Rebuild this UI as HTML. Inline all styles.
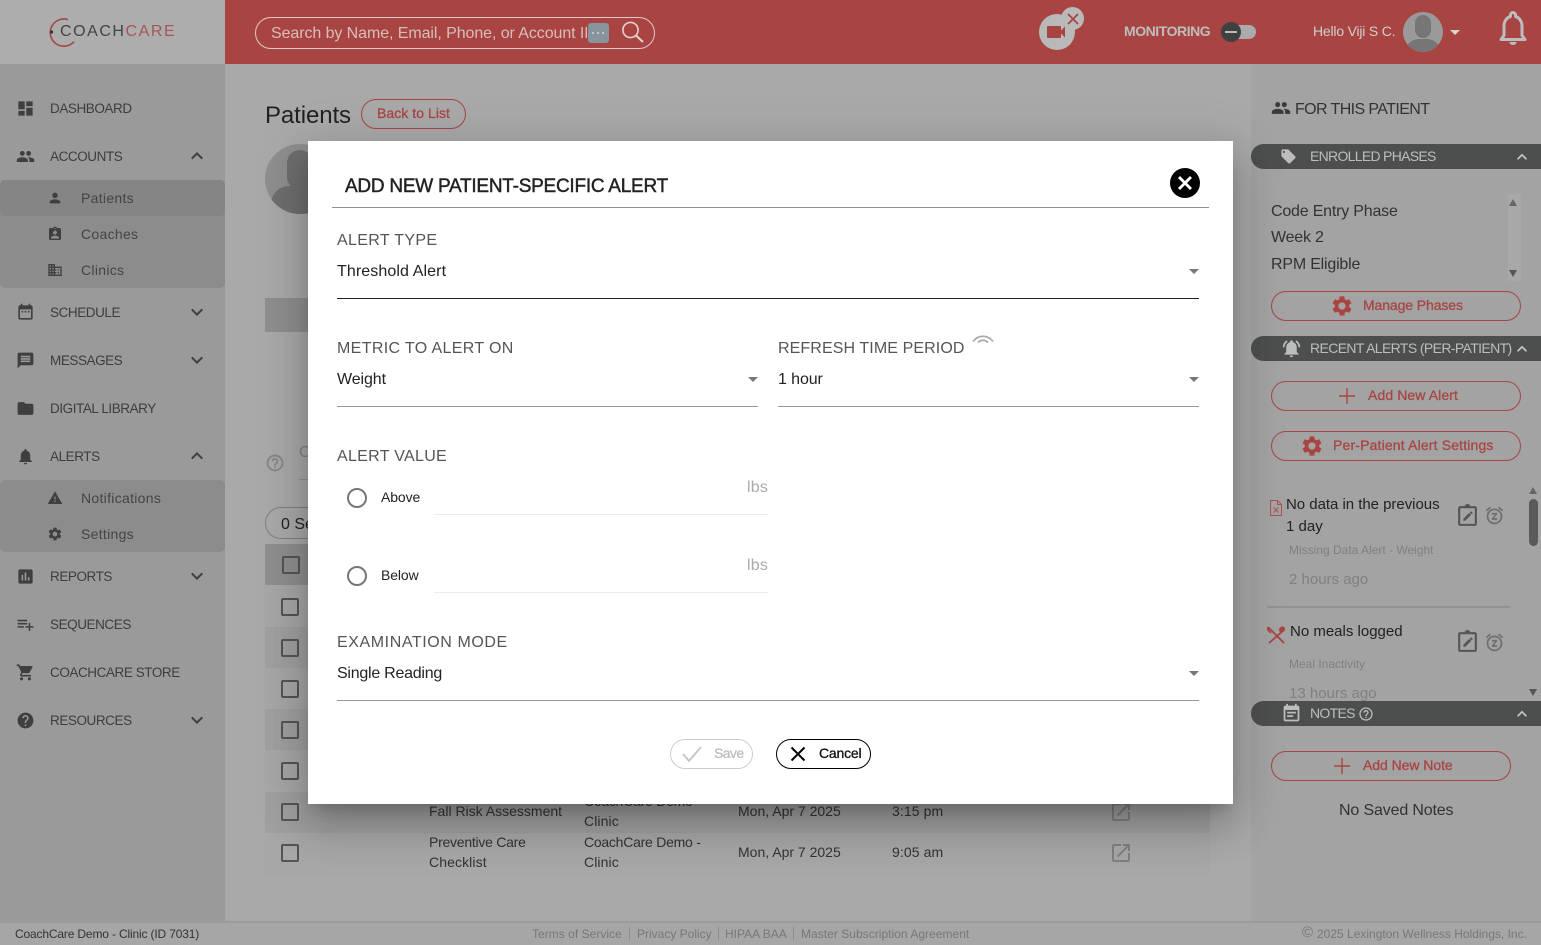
<!DOCTYPE html>
<html lang="en">
<head>
<meta charset="utf-8">
<title>CoachCare</title>
<style>
*{box-sizing:border-box}
html,body{margin:0;padding:0;width:1541px;height:945px;overflow:hidden;background:#a9a9a9;font-family:"Liberation Sans",Arial,sans-serif;color:#333}
.b{position:absolute}
.t{position:absolute;white-space:nowrap;line-height:20px;margin-top:-10px;font-size:14px}
svg.i{position:absolute;fill:currentColor}
.nav{color:#3d3d3d;font-size:13.5px;letter-spacing:-.43px}
.sub{color:#444;font-size:14px;letter-spacing:.3px}
.pill{position:absolute;border:1px solid #a84543;border-radius:16px}
.red{color:#a84543;font-weight:400;-webkit-text-stroke:.3px #a84543;font-size:14px;letter-spacing:.1px}
.bar{position:absolute;left:1251px;width:290px;background:#4d4f4f;border-radius:13px 0 0 13px}
.bt{color:#bdbdbd;font-size:14px;letter-spacing:-.7px}
.lab{color:#555;font-size:16px;letter-spacing:.35px}
.val{color:#222;font-size:16px;letter-spacing:-.1px}
.row{position:absolute;left:265px;width:945px;height:41px}
.cb{position:absolute;width:18px;height:18px;border:2px solid #555;border-radius:2px}
.cell{color:#333;font-size:14px;letter-spacing:0}
.foot{color:#777;font-size:12px;letter-spacing:0}
#modal{position:absolute;left:308px;top:141px;width:925px;height:663px;background:#fff;box-shadow:0 11px 15px -7px rgba(0,0,0,.2),0 24px 38px 3px rgba(0,0,0,.14),0 9px 46px 8px rgba(0,0,0,.12)}
</style>
</head>
<body>
<svg width="0" height="0" style="position:absolute">
<defs>
<symbol id="dash" viewBox="0 0 24 24"><path d="M3 13h8V3H3v10zm0 8h8v-6H3v6zm10 0h8V11h-8v10zm0-18v6h8V3h-8z"/></symbol>
<symbol id="group" viewBox="0 0 24 24"><path d="M16 11c1.66 0 2.99-1.34 2.99-3S17.66 5 16 5c-1.66 0-3 1.34-3 3s1.34 3 3 3zm-8 0c1.66 0 2.99-1.34 2.99-3S9.66 5 8 5C6.34 5 5 6.34 5 8s1.34 3 3 3zm0 2c-2.33 0-7 1.17-7 3.5V19h14v-2.5c0-2.33-4.67-3.5-7-3.5zm8 0c-.29 0-.62.02-.97.05 1.16.84 1.97 1.97 1.97 3.45V19h6v-2.5c0-2.33-4.67-3.5-7-3.5z"/></symbol>
<symbol id="less" viewBox="0 0 24 24"><path d="M12 8l-6 6 1.41 1.41L12 10.83l4.59 4.58L18 14z"/></symbol>
<symbol id="more" viewBox="0 0 24 24"><path d="M16.59 8.59L12 13.17 7.41 8.59 6 10l6 6 6-6z"/></symbol>
<symbol id="person" viewBox="0 0 24 24"><path d="M12 12c2.21 0 4-1.79 4-4s-1.79-4-4-4-4 1.79-4 4 1.79 4 4 4zm0 2c-2.67 0-8 1.34-8 4v2h16v-2c0-2.66-5.33-4-8-4z"/></symbol>
<symbol id="ind" viewBox="0 0 24 24"><path d="M19 3h-4.18C14.4 1.84 13.3 1 12 1c-1.3 0-2.4.84-2.82 2H5c-1.1 0-2 .9-2 2v14c0 1.1.9 2 2 2h14c1.1 0 2-.9 2-2V5c0-1.1-.9-2-2-2zm-7 0c.55 0 1 .45 1 1s-.45 1-1 1-1-.45-1-1 .45-1 1-1zm0 4c1.66 0 3 1.34 3 3s-1.34 3-3 3-3-1.34-3-3 1.34-3 3-3zm6 12H6v-1.4c0-2 4-3.1 6-3.1s6 1.1 6 3.1V19z"/></symbol>
<symbol id="domain" viewBox="0 0 24 24"><path d="M12 7V3H2v18h20V7H12zM6 19H4v-2h2v2zm0-4H4v-2h2v2zm0-4H4V9h2v2zm0-4H4V5h2v2zm4 12H8v-2h2v2zm0-4H8v-2h2v2zm0-4H8V9h2v2zm0-4H8V5h2v2zm10 12h-8v-2h2v-2h-2v-2h2v-2h-2V9h8v10zm-2-8h-2v2h2v-2zm0 4h-2v2h2v-2z"/></symbol>
<symbol id="event" viewBox="0 0 24 24"><path d="M19 3h-1V1h-2v2H8V1H6v2H5c-1.11 0-2 .9-2 2v14c0 1.1.89 2 2 2h14c1.1 0 2-.9 2-2V5c0-1.1-.9-2-2-2zm0 16H5V8h14v11zM7 10h2v2H7zm4 0h2v2h-2zm4 0h2v2h-2z"/></symbol>
<symbol id="msg" viewBox="0 0 24 24"><path d="M20 2H4c-1.1 0-1.99.9-1.99 2L2 22l4-4h14c1.1 0 2-.9 2-2V4c0-1.1-.9-2-2-2zm-2 12H6v-2h12v2zm0-3H6V9h12v2zm0-3H6V6h12v2z"/></symbol>
<symbol id="folder" viewBox="0 0 24 24"><path d="M10 4H4c-1.1 0-1.99.9-1.99 2L2 18c0 1.1.9 2 2 2h16c1.1 0 2-.9 2-2V8c0-1.1-.9-2-2-2h-8l-2-2z"/></symbol>
<symbol id="bell" viewBox="0 0 24 24"><path d="M12 22c1.1 0 2-.9 2-2h-4c0 1.1.89 2 2 2zm6-6v-5c0-3.07-1.64-5.64-4.5-6.32V4c0-.83-.67-1.5-1.5-1.5s-1.5.67-1.5 1.5v.68C7.63 5.36 6 7.92 6 11v5l-2 2v1h16v-1l-2-2z"/></symbol>
<symbol id="bella" viewBox="0 0 24 24"><path d="M7.58 4.08L6.15 2.65C3.75 4.48 2.17 7.3 2.03 10.5h2c.15-2.65 1.51-4.97 3.55-6.42zm12.39 6.42h2c-.15-3.2-1.73-6.02-4.12-7.85l-1.42 1.43c2.02 1.45 3.39 3.77 3.54 6.42zM18 11c0-3.07-1.64-5.64-4.5-6.32V4c0-.83-.67-1.5-1.5-1.5s-1.5.67-1.5 1.5v.68C7.63 5.36 6 7.92 6 11v5l-2 2v1h16v-1l-2-2v-5zm-6 11c.14 0 .27-.01.4-.04.65-.14 1.18-.58 1.44-1.18.1-.24.15-.5.15-.78h-4c.01 1.1.9 2 2.01 2z"/></symbol>
<symbol id="warn" viewBox="0 0 24 24"><path d="M1 21h22L12 2 1 21zm12-3h-2v-2h2v2zm0-4h-2v-4h2v4z"/></symbol>
<symbol id="gear" viewBox="0 0 24 24"><path d="M19.14 12.94c.04-.3.06-.61.06-.94 0-.32-.02-.64-.07-.94l2.03-1.58c.18-.14.23-.41.12-.61l-1.92-3.32c-.12-.22-.37-.29-.59-.22l-2.39.96c-.5-.38-1.03-.7-1.62-.94l-.36-2.54c-.04-.24-.24-.41-.48-.41h-3.84c-.24 0-.43.17-.47.41l-.36 2.54c-.59.24-1.13.57-1.62.94l-2.39-.96c-.22-.08-.47 0-.59.22L2.74 8.87c-.12.21-.08.47.12.61l2.03 1.58c-.05.3-.09.63-.09.94s.02.64.07.94l-2.03 1.58c-.18.14-.23.41-.12.61l1.92 3.32c.12.22.37.29.59.22l2.39-.96c.5.38 1.03.7 1.62.94l.36 2.54c.05.24.24.41.48.41h3.84c.24 0 .44-.17.47-.41l.36-2.54c.59-.24 1.13-.56 1.62-.94l2.39.96c.22.08.47 0 .59-.22l1.92-3.32c.12-.22.07-.47-.12-.61l-2.01-1.58zM12 15.6c-1.98 0-3.6-1.62-3.6-3.6s1.62-3.6 3.6-3.6 3.6 1.62 3.6 3.6-1.62 3.6-3.6 3.6z"/></symbol>
<symbol id="report" viewBox="0 0 24 24"><path d="M19 3H5c-1.1 0-2 .9-2 2v14c0 1.1.9 2 2 2h14c1.1 0 2-.9 2-2V5c0-1.1-.9-2-2-2zM9 17H7v-7h2v7zm4 0h-2V7h2v10zm4 0h-2v-4h2v4z"/></symbol>
<symbol id="seq" viewBox="0 0 24 24"><path d="M14 10H2v2h12v-2zm0-4H2v2h12V6zm4 8v-4h-2v4h-4v2h4v4h2v-4h4v-2h-4zM2 16h8v-2H2v2z"/></symbol>
<symbol id="cart" viewBox="0 0 24 24"><path d="M7 18c-1.1 0-1.99.9-1.99 2S5.9 22 7 22s2-.9 2-2-.9-2-2-2zM1 2v2h2l3.6 7.59-1.35 2.45c-.16.28-.25.61-.25.96 0 1.1.9 2 2 2h12v-2H7.42c-.14 0-.25-.11-.25-.25l.03-.12.9-1.83h7.45c.75 0 1.41-.41 1.75-1.03l3.58-6.49c.08-.14.12-.31.12-.48 0-.55-.45-1-1-1H5.21l-.94-2H1zm16 16c-1.1 0-1.99.9-1.99 2s.89 2 1.99 2 2-.9 2-2-.9-2-2-2z"/></symbol>
<symbol id="help" viewBox="0 0 24 24"><path d="M12 2C6.48 2 2 6.48 2 12s4.48 10 10 10 10-4.48 10-10S17.52 2 12 2zm1 17h-2v-2h2v2zm2.07-7.75l-.9.92C13.45 12.9 13 13.5 13 15h-2v-.5c0-1.1.45-2.1 1.17-2.83l1.24-1.26c.37-.36.59-.86.59-1.41 0-1.1-.9-2-2-2s-2 .9-2 2H8c0-2.21 1.79-4 4-4s4 1.79 4 4c0 .88-.36 1.68-.93 2.25z"/></symbol>
<symbol id="helpo" viewBox="0 0 24 24"><path d="M11 18h2v-2h-2v2zm1-16C6.48 2 2 6.48 2 12s4.48 10 10 10 10-4.48 10-10S17.52 2 12 2zm0 18c-4.41 0-8-3.59-8-8s3.59-8 8-8 8 3.59 8 8-3.59 8-8 8zm0-14c-2.21 0-4 1.79-4 4h2c0-1.1.9-2 2-2s2 .9 2 2c0 2-3 1.75-3 5h2c0-2.25 3-2.5 3-5 0-2.21-1.79-4-4-4z"/></symbol>
<symbol id="tag" viewBox="0 0 24 24"><path d="M21.41 11.58l-9-9C12.05 2.22 11.55 2 11 2H4c-1.1 0-2 .9-2 2v7c0 .55.22 1.05.59 1.42l9 9c.36.36.86.58 1.41.58.55 0 1.05-.22 1.41-.59l7-7c.37-.36.59-.86.59-1.41 0-.55-.23-1.06-.59-1.42zM5.5 7C4.67 7 4 6.33 4 5.5S4.67 4 5.5 4 7 4.67 7 5.5 6.33 7 5.5 7z"/></symbol>
<symbol id="open" viewBox="0 0 24 24"><path d="M19 19H5V5h7V3H5c-1.11 0-2 .9-2 2v14c0 1.1.89 2 2 2h14c1.1 0 2-.9 2-2v-7h-2v7zM14 3v2h3.59l-9.83 9.83 1.41 1.41L19 6.41V10h2V3h-7z"/></symbol>
<symbol id="snooze" viewBox="0 0 24 24"><path d="M9 11h3.63L9 15.2V17h6v-2h-3.63L15 10.8V9H9v2zm7.056-7.654l1.282-1.535 4.607 3.85-1.28 1.54zM3.336 7.19l-1.28-1.536L6.662 1.81l1.28 1.536zM12 6c3.86 0 7 3.14 7 7s-3.14 7-7 7-7-3.14-7-7 3.14-7 7-7m0-2c-4.97 0-9 4.03-9 9s4.03 9 9 9 9-4.03 9-9-4.03-9-9-9z"/></symbol>
<symbol id="edit" viewBox="0 0 24 24"><path d="M19 3h-4.2C14.4 1.8 13.3 1 12 1s-2.4.8-2.8 2H5c-1.1 0-2 .9-2 2v15c0 1.1.9 2 2 2h14c1.1 0 2-.9 2-2V5c0-1.1-.9-2-2-2zm0 17H5V5h14v15zM8 17h1.9l5.6-5.6-1.9-1.9L8 15.1V17zm8.9-7-.9.9-1.9-1.9.9-.9c.2-.2.5-.2.7 0l1.2 1.2c.2.2.2.5 0 .7z"/></symbol>
<symbol id="note" viewBox="0 0 24 24"><path d="M19 3h-1V1h-2v2H8V1H6v2H5c-1.1 0-2 .9-2 2v14c0 1.1.9 2 2 2h14c1.1 0 2-.9 2-2V5c0-1.1-.9-2-2-2zm0 16H5V8h14v11zM7 10h10v2H7zm0 4h7v2H7z"/></symbol>
<symbol id="plus" viewBox="0 0 16 16"><path d="M7.3 0h1.4v7.3H16v1.4H8.7V16H7.3V8.7H0V7.3h7.3z"/></symbol>
<symbol id="caret" viewBox="0 0 10 5"><path d="M0 0h10L5 5z"/></symbol>
</defs>
</svg>

<!-- header -->
<div class="b" style="left:0;top:0;width:225px;height:64px;background:#adadad"></div>
<div class="b" style="left:225px;top:0;width:1316px;height:64px;background:#a84543"></div>
<svg class="b" style="left:48px;top:14px" width="32" height="36" viewBox="0 0 32 36"><path d="M20 5.6A13.6 13.6 0 1 0 26 27.6" fill="none" stroke="#a84543" stroke-width="1.6"/><circle cx="3.5" cy="18" r="1.6" fill="#333"/></svg>
<div class="t" style="left:60px;top:32px;font-size:16px;letter-spacing:1.55px;color:#444">COACH<span style="color:#a85553">CARE</span></div>

<div class="b" style="left:255px;top:17px;width:400px;height:32px;border:1.5px solid #e2c8c6;border-radius:16px"></div>
<div class="b" style="left:271px;top:20px;width:316px;height:26px;overflow:hidden"><div class="t" style="left:0;top:12px;font-size:16px;line-height:24px;color:#d9bdbb;letter-spacing:-.08px;margin-top:-10px">Search by Name, Email, Phone, or Account ID</div></div>
<div class="b" style="left:588px;top:23px;width:21px;height:20px;background:#87949c;border-radius:3px"></div>
<div class="b" style="left:592px;top:32px;width:2px;height:2px;border-radius:50%;background:#cfd6da"></div>
<div class="b" style="left:597px;top:32px;width:2px;height:2px;border-radius:50%;background:#cfd6da"></div>
<div class="b" style="left:602px;top:32px;width:2px;height:2px;border-radius:50%;background:#cfd6da"></div>
<svg class="b" style="left:621px;top:21px" width="24" height="22" viewBox="0 0 24 22" fill="none" stroke="#e6cfcd" stroke-width="1.6"><circle cx="9.5" cy="9" r="7.6"/><path d="M15 14.5l7 6.5" stroke-width="2.2"/></svg>

<div class="b" style="left:1039px;top:14px;width:36px;height:36px;border-radius:50%;background:#b9b9b9"></div>
<div class="b" style="left:1061px;top:7px;width:23px;height:23px;border-radius:50%;background:#b9b9b9"></div>
<svg class="i" style="left:1044px;top:20px;color:#a84543" width="24" height="24" viewBox="0 0 24 24"><path d="M17 10.5V7c0-.55-.45-1-1-1H4c-.55 0-1 .45-1 1v10c0 .55.45 1 1 1h12c.55 0 1-.45 1-1v-3.5l4 4v-11l-4 4z"/></svg>
<svg class="b" style="left:1067px;top:13px" width="12" height="12" viewBox="0 0 12 12"><path d="M1 1l10 10M11 1L1 11" stroke="#a84543" stroke-width="1.8"/></svg>

<div class="t" style="left:1124px;top:31px;font-size:14px;font-weight:bold;color:#bdbdbd;letter-spacing:-.45px">MONITORING</div>
<div class="b" style="left:1225px;top:25px;width:31px;height:14px;border-radius:7px;background:#ababab"></div>
<div class="b" style="left:1221px;top:22px;width:20px;height:20px;border-radius:50%;background:#3f4040"></div>
<div class="b" style="left:1225px;top:31px;width:12px;height:2px;background:#bbb"></div>
<div class="t" style="left:1313px;top:31px;font-size:14px;color:#cfcfcf;letter-spacing:-.2px">Hello Viji S C.</div>
<div class="b" style="left:1403px;top:12px;width:40px;height:40px;border-radius:50%;background:#9a9a9a;overflow:hidden">
<div class="b" style="left:12px;top:3px;width:16px;height:23px;border-radius:8px;background:#767676"></div>
<div class="b" style="left:2px;top:27px;width:36px;height:20px;border-radius:14px 14px 0 0;background:#767676"></div>
</div>
<svg class="i" style="left:1450px;top:30px;color:#d5d5d5" width="10" height="5"><use href="#caret"/></svg>
<svg class="b" style="left:1497px;top:11px" width="32" height="36" viewBox="0 0 32 36"><path d="M16 34c2 0 3.400-1.200 3.600-3h-7.200c.2 1.800 1.600 3 3.600 3z" fill="#bdbdbd"/><path d="M4 28.500l3-4V15c0-5 3-8.500 6.500-9.500V4a2.500 2.500 0 0 1 5 0v1.500C22 6.500 25 10 25 15v9.500l3 4z" fill="none" stroke="#bdbdbd" stroke-width="3" stroke-linejoin="round"/></svg>

<!-- sidebar -->
<div class="b" style="left:0;top:64px;width:225px;height:858px;background:#9a9a9a"></div>
<div class="b" style="left:0;top:180px;width:225px;height:108px;background:#8c8c8c;border-radius:5px"></div>
<div class="b" style="left:0;top:180px;width:225px;height:36px;background:#858585;border-radius:5px"></div>
<div class="b" style="left:0;top:480px;width:225px;height:72px;background:#8c8c8c;border-radius:5px"></div>

<svg class="i" style="left:15.500px;top:98.500px;color:#3f3f3f" width="19" height="19"><use href="#dash"/></svg><div class="t nav" style="left:50px;top:109px">DASHBOARD</div>
<svg class="i" style="left:15.500px;top:146.500px;color:#3f3f3f" width="19" height="19"><use href="#group"/></svg><div class="t nav" style="left:50px;top:157px">ACCOUNTS</div>
<svg class="i" style="left:185px;top:144px;color:#3f3f3f" width="24" height="24"><use href="#less"/></svg>
<svg class="i" style="left:47px;top:190px;color:#3f3f3f" width="16" height="16"><use href="#person"/></svg><div class="t sub" style="left:81px;top:198px">Patients</div>
<svg class="i" style="left:47px;top:226px;color:#3f3f3f" width="16" height="16"><use href="#ind"/></svg><div class="t sub" style="left:81px;top:234px">Coaches</div>
<svg class="i" style="left:47px;top:262px;color:#3f3f3f" width="16" height="16"><use href="#domain"/></svg><div class="t sub" style="left:81px;top:270px">Clinics</div>
<svg class="i" style="left:15.500px;top:302.500px;color:#3f3f3f" width="19" height="19"><use href="#event"/></svg><div class="t nav" style="left:50px;top:313px">SCHEDULE</div>
<svg class="i" style="left:185px;top:300px;color:#3f3f3f" width="24" height="24"><use href="#more"/></svg>
<svg class="i" style="left:15.500px;top:350.500px;color:#3f3f3f" width="19" height="19"><use href="#msg"/></svg><div class="t nav" style="left:50px;top:361px">MESSAGES</div>
<svg class="i" style="left:185px;top:348px;color:#3f3f3f" width="24" height="24"><use href="#more"/></svg>
<svg class="i" style="left:15.500px;top:398.500px;color:#3f3f3f" width="19" height="19"><use href="#folder"/></svg><div class="t nav" style="left:50px;top:409px">DIGITAL LIBRARY</div>
<svg class="i" style="left:15.500px;top:446.500px;color:#3f3f3f" width="19" height="19"><use href="#bell"/></svg><div class="t nav" style="left:50px;top:457px">ALERTS</div>
<svg class="i" style="left:185px;top:444px;color:#3f3f3f" width="24" height="24"><use href="#less"/></svg>
<svg class="i" style="left:47px;top:490px;color:#3f3f3f" width="16" height="16"><use href="#warn"/></svg><div class="t sub" style="left:81px;top:498px">Notifications</div>
<svg class="i" style="left:47px;top:526px;color:#3f3f3f" width="16" height="16"><use href="#gear"/></svg><div class="t sub" style="left:81px;top:534px">Settings</div>
<svg class="i" style="left:15.500px;top:566.500px;color:#3f3f3f" width="19" height="19"><use href="#report"/></svg><div class="t nav" style="left:50px;top:577px">REPORTS</div>
<svg class="i" style="left:185px;top:564px;color:#3f3f3f" width="24" height="24"><use href="#more"/></svg>
<svg class="i" style="left:15.500px;top:614.500px;color:#3f3f3f" width="19" height="19"><use href="#seq"/></svg><div class="t nav" style="left:50px;top:625px">SEQUENCES</div>
<svg class="i" style="left:15.500px;top:662.500px;color:#3f3f3f" width="19" height="19"><use href="#cart"/></svg><div class="t nav" style="left:50px;top:673px">COACHCARE STORE</div>
<svg class="i" style="left:15.500px;top:710.500px;color:#3f3f3f" width="19" height="19"><use href="#help"/></svg><div class="t nav" style="left:50px;top:721px">RESOURCES</div>
<svg class="i" style="left:185px;top:708px;color:#3f3f3f" width="24" height="24"><use href="#more"/></svg>

<!-- main content behind modal -->
<div class="t" style="left:265px;top:116px;font-size:24px;line-height:28px;margin-top:-14px;color:#222;letter-spacing:-.1px">Patients</div>
<div class="pill" style="left:361px;top:99px;width:105px;height:30px"></div>
<div class="t red" style="left:377px;top:113px;letter-spacing:.05px">Back to List</div>
<div class="b" style="left:265px;top:144px;width:70px;height:70px;border-radius:50%;background:#8f8f8f;overflow:hidden">
<div class="b" style="left:22px;top:6px;width:26px;height:40px;border-radius:13px;background:#6f6f6f"></div>
<div class="b" style="left:6px;top:42px;width:58px;height:34px;border-radius:18px 18px 0 0;background:#6f6f6f"></div>
</div>
<div class="b" style="left:265px;top:298px;width:60px;height:34px;background:#8f8f8f"></div>
<svg class="i" style="left:265px;top:453px;color:#858585" width="20" height="20"><use href="#helpo"/></svg>
<div class="t" style="left:299px;top:453px;font-size:16px;color:#808080">C</div>
<div class="b" style="left:299px;top:479px;width:20px;height:1px;background:#929292"></div>
<div class="b" style="left:265px;top:507px;width:80px;height:32px;border:1px solid #808080;border-radius:16px"></div>
<div class="t" style="left:281px;top:525px;font-size:16px;color:#222">0 Se</div>

<div class="row" style="top:544px;background:#8f8f8f"></div>
<div class="row" style="top:586px;background:#a7a7a7"></div>
<div class="row" style="top:627px;background:#a0a0a0"></div>
<div class="row" style="top:668px;background:#a7a7a7"></div>
<div class="row" style="top:709px;background:#a0a0a0"></div>
<div class="row" style="top:750px;background:#a7a7a7"></div>
<div class="row" style="top:792px;background:#a0a0a0"></div>
<div class="row" style="top:833px;background:#a7a7a7"></div>
<div class="cb" style="left:282px;top:556px"></div>
<div class="cb" style="left:281px;top:598px"></div>
<div class="cb" style="left:281px;top:639px"></div>
<div class="cb" style="left:281px;top:680px"></div>
<div class="cb" style="left:281px;top:721px"></div>
<div class="cb" style="left:281px;top:762px"></div>
<div class="cb" style="left:281px;top:803px"></div>
<div class="cb" style="left:281px;top:844px"></div>
<div class="t cell" style="left:429px;top:811px">Fall Risk Assessment</div>
<div class="t cell" style="left:584px;top:801px;letter-spacing:-.25px">CoachCare Demo -</div>
<div class="t cell" style="left:584px;top:821px;letter-spacing:.1px">Clinic</div>
<div class="t cell" style="left:738px;top:811px">Mon, Apr 7 2025</div>
<div class="t cell" style="left:892px;top:811px;letter-spacing:.1px">3:15 pm</div>
<svg class="i" style="left:1109px;top:800px;color:#808080" width="24" height="24"><use href="#open"/></svg>
<div class="t cell" style="left:429px;top:842px;letter-spacing:-.25px">Preventive Care</div>
<div class="t cell" style="left:429px;top:862px;letter-spacing:.1px">Checklist</div>
<div class="t cell" style="left:584px;top:842px;letter-spacing:-.25px">CoachCare Demo -</div>
<div class="t cell" style="left:584px;top:862px;letter-spacing:.1px">Clinic</div>
<div class="t cell" style="left:738px;top:852px">Mon, Apr 7 2025</div>
<div class="t cell" style="left:892px;top:852px;letter-spacing:.1px">9:05 am</div>
<svg class="i" style="left:1109px;top:841px;color:#808080" width="24" height="24"><use href="#open"/></svg>

<!-- right panel -->
<div class="b" style="left:1251px;top:64px;width:290px;height:858px;background:#a3a3a3"></div>
<svg class="i" style="left:1271px;top:98px;color:#3a3a3a" width="20" height="20"><use href="#group"/></svg>
<div class="t" style="left:1295px;top:110px;font-size:16px;color:#333;letter-spacing:-.6px">FOR THIS PATIENT</div>

<div class="bar" style="top:144px;height:25px"></div>
<svg class="i" style="left:1280px;top:148px;color:#bdbdbd" width="17" height="17"><use href="#tag"/></svg>
<div class="t bt" style="left:1310px;top:156px">ENROLLED PHASES</div>
<svg class="i" style="left:1512px;top:147px;color:#c4c4c4" width="20" height="20"><use href="#less"/></svg>

<div class="t val" style="left:1271px;top:212px;color:#333;letter-spacing:-.2px">Code Entry Phase</div>
<div class="t val" style="left:1271px;top:238px;color:#333;letter-spacing:-.2px">Week 2</div>
<div class="t val" style="left:1271px;top:265px;color:#333;letter-spacing:-.2px">RPM Eligible</div>
<div class="b" style="left:1508px;top:194px;width:13px;height:87px;background:#a8a8a8"></div>
<div class="b" style="left:1509px;top:199px;border:4.500px solid transparent;border-top:0;border-bottom:7px solid #666"></div>
<div class="b" style="left:1509px;top:270px;border:4.500px solid transparent;border-bottom:0;border-top:7px solid #555"></div>
<div class="pill" style="left:1271px;top:291px;width:250px;height:30px"></div>
<svg class="i" style="left:1330px;top:294px;color:#a84543" width="24" height="24"><use href="#gear"/></svg>
<div class="t red" style="left:1363px;top:305px;letter-spacing:-.1px">Manage Phases</div>

<div class="bar" style="top:336px;height:25px"></div>
<svg class="i" style="left:1281px;top:338px;color:#bdbdbd" width="21" height="21"><use href="#bella"/></svg>
<div class="t bt" style="left:1310px;top:348px;letter-spacing:-.62px">RECENT ALERTS (PER-PATIENT)</div>
<svg class="i" style="left:1512px;top:339px;color:#c4c4c4" width="20" height="20"><use href="#less"/></svg>

<div class="pill" style="left:1271px;top:381px;width:250px;height:30px"></div>
<svg class="i" style="left:1339px;top:388px;color:#a84543" width="16" height="16"><use href="#plus"/></svg>
<div class="t red" style="left:1368px;top:395px">Add New Alert</div>
<div class="pill" style="left:1271px;top:431px;width:250px;height:30px"></div>
<svg class="i" style="left:1300px;top:434px;color:#a84543" width="24" height="24"><use href="#gear"/></svg>
<div class="t red" style="left:1333px;top:445px;letter-spacing:.16px">Per-Patient Alert Settings</div>

<div class="b" style="left:1251px;top:480px;width:290px;height:221px;overflow:hidden">
<svg class="b" style="left:19px;top:20px" width="12" height="16" viewBox="0 0 12 16" fill="none" stroke="#a85553" stroke-width="1"><path d="M.5.500h7l4 4v11h-11zM7.500.500v4h4M3.500 7.500l5 5M8.500 7.500l-5 5"/></svg>
<div class="t" style="left:35px;top:25px;font-size:15px;color:#222;letter-spacing:-.03px">No data in the previous</div>
<div class="t" style="left:35px;top:47px;font-size:15px;color:#222">1 day</div>
<div class="t" style="left:38px;top:70px;font-size:12px;color:#808080;letter-spacing:0">Missing Data Alert - Weight</div>
<div class="t" style="left:38px;top:100px;font-size:15px;color:#808080;letter-spacing:0">2 hours ago</div>
<div class="b" style="left:16px;top:126px;width:243px;height:2px;background:#929292"></div>
<svg class="b" style="left:16px;top:146px" width="19" height="18" viewBox="0 0 19 18" fill="none" stroke="#a84543" stroke-width="1.800"><path d="M1 1l16 16M17 4L2 17M1 1v3l3 3"/><ellipse cx="15" cy="3.500" rx="3.200" ry="2.800" transform="rotate(-40 15 3.500)" fill="#a84543" stroke="none"/></svg>
<div class="t" style="left:39px;top:152px;font-size:15px;color:#222;letter-spacing:0">No meals logged</div>
<div class="t" style="left:38px;top:184px;font-size:12px;color:#808080;letter-spacing:0">Meal Inactivity</div>
<div class="t" style="left:38px;top:214px;font-size:15px;color:#808080;letter-spacing:0">13 hours ago</div>
<svg class="i" style="left:204px;top:23px;color:#555" width="25" height="25"><use href="#edit"/></svg>
<svg class="i" style="left:233px;top:25px;color:#6f6f6f" width="21" height="21"><use href="#snooze"/></svg>
<svg class="i" style="left:204px;top:149px;color:#555" width="25" height="25"><use href="#edit"/></svg>
<svg class="i" style="left:233px;top:152px;color:#6f6f6f" width="21" height="21"><use href="#snooze"/></svg>
<div class="b" style="left:278px;top:7px;border:4.500px solid transparent;border-top:0;border-bottom:7px solid #666"></div>
<div class="b" style="left:278px;top:209px;border:4.500px solid transparent;border-bottom:0;border-top:7px solid #555"></div>
<div class="b" style="left:278px;top:19px;width:9px;height:47px;border-radius:5px;background:#5a5a5a"></div>
</div>

<div class="bar" style="top:701px;height:25px"></div>
<svg class="i" style="left:1281px;top:703px;color:#bdbdbd" width="21" height="21"><use href="#note"/></svg>
<div class="t bt" style="left:1310px;top:713px">NOTES</div>
<svg class="i" style="left:1358px;top:706px;color:#bdbdbd" width="16" height="16"><use href="#helpo"/></svg>
<svg class="i" style="left:1512px;top:704px;color:#c4c4c4" width="20" height="20"><use href="#less"/></svg>
<div class="pill" style="left:1271px;top:751px;width:240px;height:30px"></div>
<svg class="i" style="left:1334px;top:758px;color:#a84543" width="16" height="16"><use href="#plus"/></svg>
<div class="t red" style="left:1363px;top:765px;letter-spacing:-.05px">Add New Note</div>
<div class="t" style="left:1339px;top:811px;font-size:16px;color:#333;letter-spacing:-.15px">No Saved Notes</div>

<!-- footer -->
<div class="b" style="left:0;top:921px;width:1541px;height:24px;background:#a6a6a6;border-top:2px solid #9b9b9b"></div>
<div class="t" style="left:15px;top:934px;font-size:12px;color:#333;letter-spacing:-.16px">CoachCare Demo - Clinic (ID 7031)</div>
<div class="t foot" style="left:532px;top:934px;letter-spacing:.03px">Terms of Service</div>
<div class="b" style="left:629px;top:927px;width:1px;height:13px;background:#8e8e8e"></div>
<div class="t foot" style="left:637px;top:934px">Privacy Policy</div>
<div class="b" style="left:718px;top:927px;width:1px;height:13px;background:#8e8e8e"></div>
<div class="t foot" style="left:725px;top:934px">HIPAA BAA</div>
<div class="b" style="left:793px;top:927px;width:1px;height:13px;background:#8e8e8e"></div>
<div class="t foot" style="left:801px;top:934px;letter-spacing:.03px">Master Subscription Agreement</div>
<div class="t foot" style="left:1302px;top:933px;font-size:15px">©</div>
<div class="t foot" style="left:1317px;top:934px">2025 Lexington Wellness Holdings, Inc.</div>

<!-- modal -->
<div id="modal"></div>
<div class="t" style="left:345px;top:187px;font-size:19px;line-height:24px;margin-top:-12px;color:#222;-webkit-text-stroke:.45px #222;letter-spacing:-.25px">ADD NEW PATIENT-SPECIFIC ALERT</div>
<div class="b" style="left:1170px;top:168px;width:30px;height:30px;border-radius:50%;background:#000"></div>
<svg class="b" style="left:1177px;top:175px" width="16" height="16" viewBox="0 0 16 16"><path d="M2 2l12 12M14 2L2 14" stroke="#fff" stroke-width="2.800"/></svg>
<div class="b" style="left:332px;top:207px;width:877px;height:1px;background:#8e8e8e"></div>

<div class="t lab" style="left:337px;top:241px">ALERT TYPE</div>
<div class="t val" style="left:337px;top:272px;letter-spacing:.1px">Threshold Alert</div>
<svg class="i" style="left:1189px;top:269px;color:#777" width="10" height="5"><use href="#caret"/></svg>
<div class="b" style="left:337px;top:298px;width:862px;height:1px;background:#222"></div>

<div class="t lab" style="left:337px;top:349px">METRIC TO ALERT ON</div>
<div class="t val" style="left:337px;top:380px">Weight</div>
<svg class="i" style="left:748px;top:377px;color:#777" width="10" height="5"><use href="#caret"/></svg>
<div class="b" style="left:337px;top:406px;width:421px;height:1px;background:#999"></div>

<div class="t lab" style="left:778px;top:349px;letter-spacing:.1px">REFRESH TIME PERIOD</div>
<svg class="b" style="left:972px;top:333px" width="22" height="12" viewBox="0 0 22 12" fill="none" stroke="#aaa" stroke-width="1.800"><path d="M1 8.500C6.500 1.500 15.500 1.500 21 8.500"/><path d="M6 9.500c3-3 7-3 10 0"/></svg>
<div class="t val" style="left:778px;top:380px">1 hour</div>
<svg class="i" style="left:1189px;top:377px;color:#777" width="10" height="5"><use href="#caret"/></svg>
<div class="b" style="left:778px;top:406px;width:421px;height:1px;background:#999"></div>

<div class="t lab" style="left:337px;top:457px;letter-spacing:.3px">ALERT VALUE</div>
<div class="b" style="left:347px;top:488px;width:20px;height:20px;border:2px solid #777;border-radius:50%"></div>
<div class="t" style="left:381px;top:497px;color:#222;letter-spacing:-.1px">Above</div>
<div class="t" style="left:747px;top:488px;font-size:16px;color:#aaa;letter-spacing:.2px">lbs</div>
<div class="b" style="left:434px;top:514px;width:334px;height:1px;background:#ececec"></div>
<div class="b" style="left:347px;top:566px;width:20px;height:20px;border:2px solid #777;border-radius:50%"></div>
<div class="t" style="left:381px;top:575px;color:#222;letter-spacing:-.1px">Below</div>
<div class="t" style="left:747px;top:566px;font-size:16px;color:#aaa;letter-spacing:.2px">lbs</div>
<div class="b" style="left:434px;top:592px;width:334px;height:1px;background:#ececec"></div>

<div class="t lab" style="left:337px;top:643px;letter-spacing:.58px">EXAMINATION MODE</div>
<div class="t val" style="left:337px;top:674px;letter-spacing:-.25px">Single Reading</div>
<svg class="i" style="left:1189px;top:671px;color:#777" width="10" height="5"><use href="#caret"/></svg>
<div class="b" style="left:337px;top:700px;width:862px;height:1px;background:#999"></div>

<div class="b" style="left:670px;top:739px;width:83px;height:30px;border:1px solid #ccc;border-radius:15px"></div>
<svg class="b" style="left:682px;top:745px" width="20" height="18" viewBox="0 0 20 18" fill="none" stroke="#c4c4c4" stroke-width="1.800"><path d="M1 9l6 7L19 2"/></svg>
<div class="t" style="left:714px;top:753px;color:#bbb;-webkit-text-stroke:.25px #bbb;letter-spacing:-.6px">Save</div>
<div class="b" style="left:776px;top:739px;width:95px;height:30px;border:1.500px solid #000;border-radius:15px"></div>
<svg class="b" style="left:790px;top:746px" width="16" height="16" viewBox="0 0 16 16"><path d="M1.500 1.500l13 13M14.500 1.500l-13 13" stroke="#000" stroke-width="2"/></svg>
<div class="t" style="left:819px;top:753px;color:#111;-webkit-text-stroke:.3px #111;letter-spacing:-.2px">Cancel</div>
</body>
</html>
